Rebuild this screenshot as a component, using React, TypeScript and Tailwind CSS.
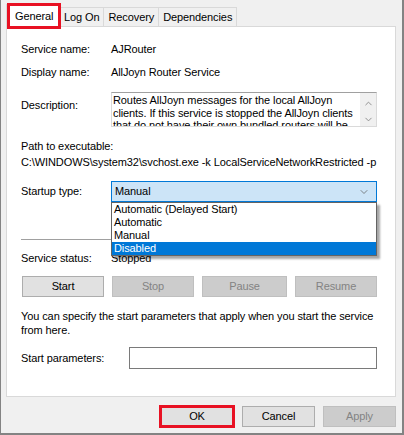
import { ChevronDown, ChevronUp } from "lucide-react";

const labelW = "w-[90px] shrink-0";

function PanelButton({ label, disabled }: { label: string; disabled?: boolean }) {
  return (
    <div
      className={
        disabled
          ? "h-[21px] flex items-center justify-center border border-[#bfbfbf] bg-[#cccccc] text-[#838383]"
          : "h-[21px] flex items-center justify-center border border-[#adadad] bg-[#e1e1e1] text-black"
      }
    >
      {label}
    </div>
  );
}

export default function App() {
  const tabs = ["Log On", "Recovery", "Dependencies"];
  const options = ["Automatic (Delayed Start)", "Automatic", "Manual", "Disabled"];

  return (
    <div
      className="relative w-[404px] h-[435px] bg-[#f0f0f0] border-l border-r-2 border-b-2 border-[#838383] pl-[5px] pr-[6px] pt-[4px] text-[11px] tracking-[-0.1px] text-black overflow-hidden"
      style={{ fontFamily: '"Liberation Sans", Arial, sans-serif' }}
    >
      {/* tabs */}
      <div className="flex items-end h-[22px]">
        <div className="relative z-10 h-[23px] -mb-px w-[54px] bg-white border border-b-0 border-[#d9d9d9] flex items-center pl-[8px]">
          General
        </div>
        {tabs.map((t) => (
          <div
            key={t}
            className="h-[19px] -ml-px border border-b-0 border-[#d9d9d9] bg-[#f0f0f0] flex items-center px-[4px] first:ml-0"
          >
            {t}
          </div>
        ))}
      </div>

      {/* panel */}
      <div className="w-[390px] h-[371px] bg-white border border-[#d9d9d9] pl-[14px] pr-[18px]">
        <div className="flex mt-[15px] h-[15px] items-center">
          <div className={labelW}>Service name:</div>
          <div>AJRouter</div>
        </div>
        <div className="flex mt-[8px] h-[15px] items-center">
          <div className={labelW}>Display name:</div>
          <div>AllJoyn Router Service</div>
        </div>

        <div className="flex mt-[12px]">
          <div className={labelW + " pt-[6px] leading-[15px]"}>Description:</div>
          <div className="flex h-[35px] w-[266px] border border-[#dadada] border-t-[#a0a0a0] overflow-hidden">
            <div className="flex-1 pl-[1px] leading-[12.5px] pt-[1px]">
              Routes AllJoyn messages for the local AllJoyn clients. If this service is stopped the AllJoyn clients
              that do not have their own bundled routers will be unable to run.
            </div>
            <div className="w-[16px] bg-[#f0f0f0] flex flex-col items-center pt-[5px] gap-[5px] text-[#8a8a8a]">
              <ChevronUp size={11} strokeWidth={2} />
              <ChevronDown size={11} strokeWidth={2} />
            </div>
          </div>
        </div>

        <div className="mt-[12px] h-[15px] leading-[15px]">Path to executable:</div>
        <div className="mt-[1px] h-[15px] leading-[15px] whitespace-nowrap overflow-hidden w-[357px]">
          C:\WINDOWS\system32\svchost.exe -k LocalServiceNetworkRestricted -p
        </div>

        <div className="flex mt-[11px] items-center">
          <div className={labelW}>Startup type:</div>
          <div className="relative w-[266px]">
            <div className="h-[21px] border border-[#0078d7] bg-[#cce4f7] flex items-center justify-between pl-[3px] pr-[6px]">
              <span>Manual</span>
              <ChevronDown size={12} strokeWidth={1.5} className="text-[#606060]" />
            </div>
            <div className="absolute left-0 top-[21px] w-[266px] z-20 bg-white border border-[#646464] shadow-[3px_3px_2px_rgba(0,0,0,0.35)]">
              {options.map((o) => (
                <div
                  key={o}
                  className={
                    o === "Disabled"
                      ? "h-[13px] leading-[13px] pl-[2px] bg-[#0078d7] text-white"
                      : "h-[13px] leading-[13px] pl-[2px]"
                  }
                >
                  {o}
                </div>
              ))}
            </div>
          </div>
        </div>

        <div className="mt-[37px] h-px w-[356px] bg-[#a0a0a0]" />

        <div className="flex mt-[11px] h-[15px] items-center">
          <div className={labelW}>Service status:</div>
          <div>Stopped</div>
        </div>

        <div className="grid grid-cols-[82px_82px_85px_82px] gap-[8px] mt-[10px] ml-[1px]">
          <PanelButton label="Start" />
          <PanelButton label="Stop" disabled />
          <PanelButton label="Pause" disabled />
          <PanelButton label="Resume" disabled />
        </div>

        <div className="mt-[12px] leading-[14px] w-[356px]">
          You can specify the start parameters that apply when you start the service from here.
        </div>

        <div className="flex mt-[10px] items-center">
          <div className="w-[108px] shrink-0">Start parameters:</div>
          <div className="h-[22px] w-[248px] border border-[#7a7a7a] bg-white" />
        </div>
      </div>

      {/* dialog buttons */}
      <div className="flex justify-end items-center gap-[6px] mt-[8px] h-[23px]">
        <div className="w-[76px] h-[23px] border-[3px] border-[#e81123] bg-[#e1e1e1] flex items-center justify-center">
          OK
        </div>
        <div className="w-[73px] h-[21px] border border-[#adadad] bg-[#e1e1e1] flex items-center justify-center ml-[1px]">
          Cancel
        </div>
        <div className="w-[73px] h-[21px] border border-[#bfbfbf] bg-[#cccccc] text-[#838383] flex items-center justify-center ml-[2px]">
          Apply
        </div>
      </div>

      {/* annotation around selected tab */}
      <div className="absolute left-[6px] top-[3px] w-[54px] h-[26px] border-[3px] border-[#e81123] z-30" />
    </div>
  );
}
